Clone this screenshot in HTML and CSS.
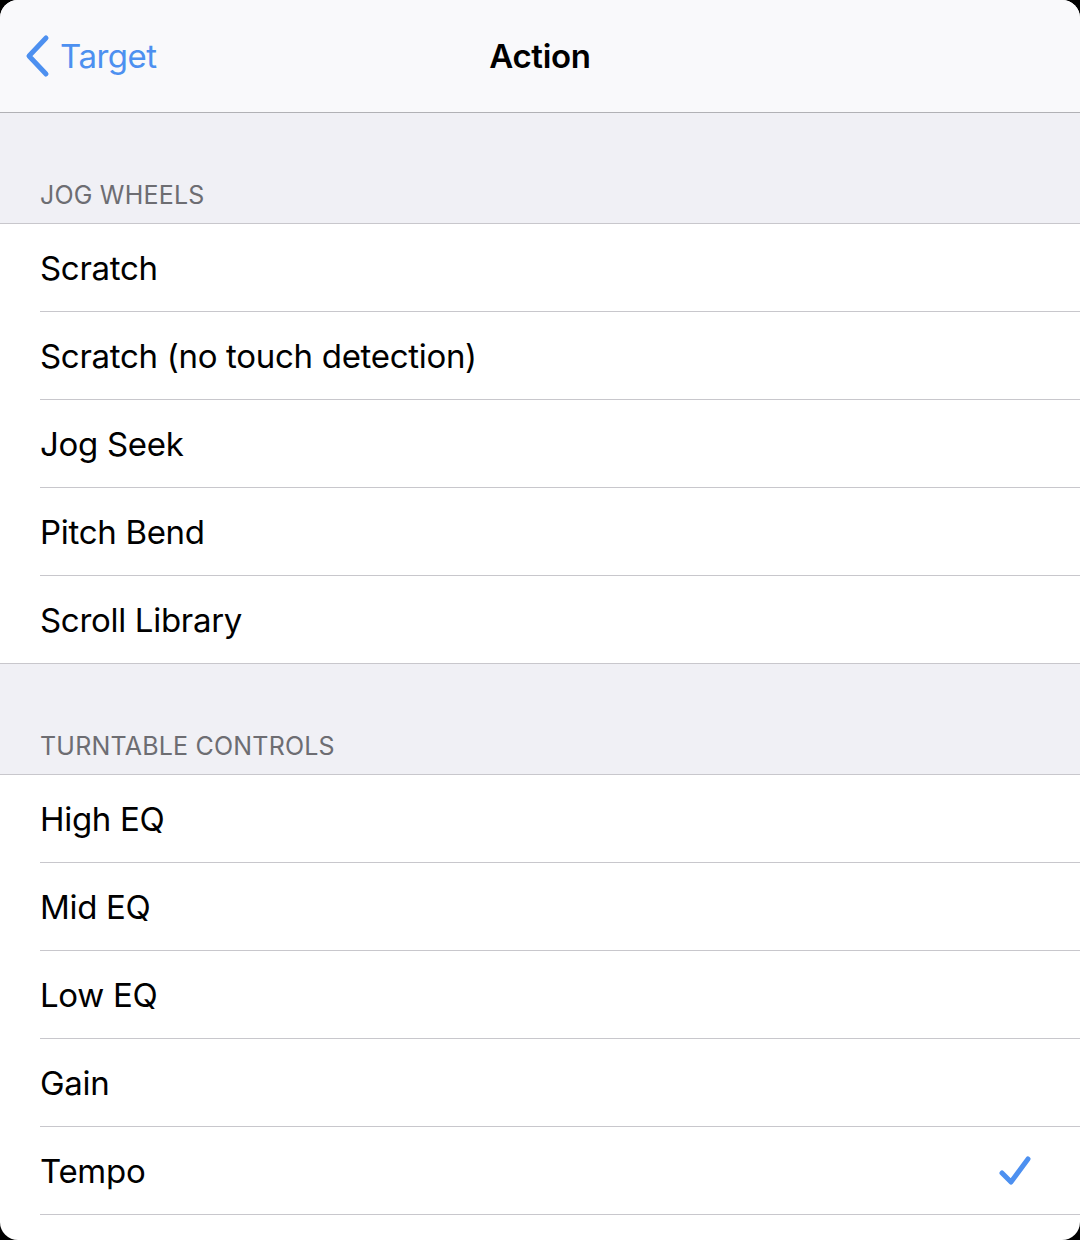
FILE: index.html
```html
<!DOCTYPE html>
<html>
<head>
    <title>Action</title>
    <link rel="stylesheet" href="styles.css">
</head>
<body>
    <div class="sheet">
        <div class="navbar">
            <a class="back" href="#">
                <svg class="chevron" width="26" height="44" viewBox="0 0 26 44">
                    <path d="M22 4 L5 22 L22 40" fill="none" stroke="#4d90f0" stroke-width="5" stroke-linecap="round" stroke-linejoin="round"/>
                </svg>
                <span>Target</span>
            </a>
            <div class="nav-title">Action</div>
        </div>

        <div class="section-header">JOG WHEELS</div>
        <ul class="list">
            <li>Scratch</li>
            <li>Scratch (no touch detection)</li>
            <li>Jog Seek</li>
            <li>Pitch Bend</li>
            <li>Scroll Library</li>
        </ul>

        <div class="section-header">TURNTABLE CONTROLS</div>
        <ul class="list open">
            <li>High EQ</li>
            <li>Mid EQ</li>
            <li>Low EQ</li>
            <li>Gain</li>
            <li class="selected">Tempo
                <svg class="check" width="34" height="34" viewBox="0 0 34 34">
                    <path d="M4 19 L13 28 L30 5" fill="none" stroke="#4d90f0" stroke-width="5" stroke-linecap="round" stroke-linejoin="round"/>
                </svg>
            </li>
        </ul>
    </div>
</body>
</html>
```

FILE: styles.css
```css
body {
    margin: 0;
    padding: 0;
    background-color: #000;
    font-family: Inter, "Noto Sans", sans-serif;
}
.sheet {
    width: 1080px;
    height: 1240px;
    background: #fff;
    border-radius: 18px;
    overflow: hidden;
}
.navbar {
    height: 112px;
    background-color: #f9f9fb;
    border-bottom: 1px solid #b1b1b5;
    display: flex;
    align-items: center;
    justify-content: center;
    position: relative;
}
.back {
    position: absolute;
    left: 24px;
    top: 34px;
    display: flex;
    align-items: center;
    gap: 10px;
    color: #4d90f0;
    text-decoration: none;
    font-size: 33px;
    letter-spacing: -0.5px;
}
.chevron {
    display: block;
}
.nav-title {
    font-size: 33px;
    font-weight: 600;
    color: #000;
    letter-spacing: -0.3px;
}
.section-header {
    height: 111px;
    box-sizing: border-box;
    background-color: #f0f0f5;
    border-bottom: 1px solid #c8c7cc;
    padding: 0 40px 13px;
    display: flex;
    align-items: flex-end;
    font-size: 25px;
    color: #6d6d72;
    letter-spacing: 0.2px;
}
.list {
    list-style: none;
    margin: 0;
    padding: 0 0 0 40px;
    background: #fff;
    border-bottom: 1px solid #c8c7cc;
}
.list.open {
    border-bottom: none;
}
.list li {
    height: 88px;
    box-sizing: border-box;
    display: flex;
    align-items: center;
    justify-content: space-between;
    padding: 0 48px 0 0;
    font-size: 33px;
    color: #000;
    letter-spacing: -0.3px;
    border-bottom: 1px solid #c8c7cc;
}
.list li:last-child {
    height: 87px;
    border-bottom: none;
}
.list.open li:last-child {
    height: 88px;
    border-bottom: 1px solid #c8c7cc;
}
.check {
    display: block;
}
```
